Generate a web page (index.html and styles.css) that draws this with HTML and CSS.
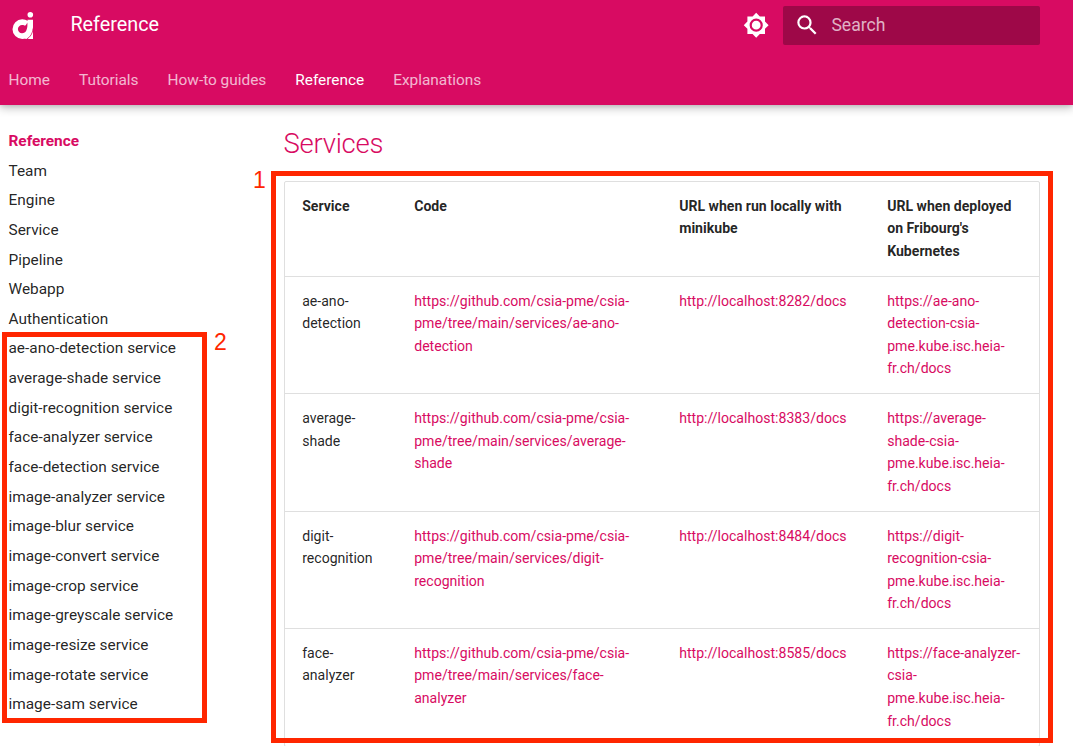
FILE: index.html
```html
<!DOCTYPE html>
<html lang="en">
<head>
<meta charset="utf-8">
<title>Reference</title>
<link rel="stylesheet" href="styles.css">
</head>
<body>
<header class="header">
  <div class="topbar">
    <svg class="logo" viewBox="0 0 22 28" width="22" height="28">
      <circle cx="18.3" cy="2.800" r="2.800" fill="#fff"/>
      <path fill="#fff" d="M21 17V27H13Z"/>
      <path fill="#fff" d="M10.200 7.300C12.500 7.300 14.300 8 15.500 9V7.800H21V15C21 22.500 16.500 27 10.200 27A9.700 9.850 0 0 1 10.200 7.300Z"/>
      <path fill="#d80b62" d="M10.200 13C12 13 12.800 14 13.300 13.500C14.300 12.800 15 11.500 15.300 10.500C15.700 13.500 15.300 16.500 14.300 18.500C13.500 20.300 12 21.300 10 21.300A4.200 4.150 0 0 1 10.200 13Z"/>
      <path fill="none" stroke="#d80b62" stroke-width=".8" d="M21.200 16.500C20.500 21.500 18.500 25 14.500 27.200"/>
    </svg>
    <div class="title">Reference</div>
    <svg class="theme" viewBox="0 0 24 24"><path fill="#fff" d="M12 8a4 4 0 0 0-4 4 4 4 0 0 0 4 4 4 4 0 0 0 4-4 4 4 0 0 0-4-4m0 10a6 6 0 0 1-6-6 6 6 0 0 1 6-6 6 6 0 0 1 6 6 6 6 0 0 1-6 6m8-9.310V4h-4.690L12 .69 8.690 4H4v4.690L.69 12 4 15.310V20h4.690L12 23.310 15.310 20H20v-4.690L23.310 12 20 8.690Z"/></svg>
    <div class="search">
      <svg class="glass" viewBox="0 0 24 24"><path fill="#fff" d="M9.500 3A6.500 6.500 0 0 1 16 9.500c0 1.610-.59 3.090-1.560 4.230l.27.27h.79l5 5-1.500 1.500-5-5v-.79l-.27-.27A6.516 6.516 0 0 1 9.500 16 6.500 6.500 0 0 1 3 9.500 6.500 6.500 0 0 1 9.500 3m0 2C7 5 5 7 5 9.500S7 14 9.500 14 14 12 14 9.500 12 5 9.500 5Z"/></svg>
      <span class="hint">Search</span>
    </div>
  </div>
  <nav class="tabs">
    <a>Home</a><a>Tutorials</a><a>How-to guides</a><a class="active">Reference</a><a>Explanations</a>
  </nav>
</header>
<div class="main">
  <nav class="sidebar">
    <a class="section">Reference</a>
    <a>Team</a>
    <a>Engine</a>
    <a>Service</a>
    <a>Pipeline</a>
    <a>Webapp</a>
    <a>Authentication</a>
    <a>ae-ano-detection service</a>
    <a>average-shade service</a>
    <a>digit-recognition service</a>
    <a>face-analyzer service</a>
    <a>face-detection service</a>
    <a>image-analyzer service</a>
    <a>image-blur service</a>
    <a>image-convert service</a>
    <a>image-crop service</a>
    <a>image-greyscale service</a>
    <a>image-resize service</a>
    <a>image-rotate service</a>
    <a>image-sam service</a>
  </nav>
  <article class="content">
    <h2>Services</h2>
    <table>
      <colgroup><col class="c1"><col class="c2"><col class="c3"><col></colgroup>
      <thead>
        <tr><th>Service</th><th>Code</th><th>URL when run locally with<br>minikube</th><th>URL when deployed<br>on Fribourg's<br>Kubernetes</th></tr>
      </thead>
      <tbody>
        <tr><td>ae-ano-<br>detection</td><td><a>https://github.com/csia-pme/csia-<br>pme/tree/main/services/ae-ano-<br>detection</a></td><td><a>http://localhost:8282/docs</a></td><td><a>https://ae-ano-<br>detection-csia-<br>pme.kube.isc.heia-<br>fr.ch/docs</a></td></tr>
        <tr><td>average-<br>shade</td><td><a>https://github.com/csia-pme/csia-<br>pme/tree/main/services/average-<br>shade</a></td><td><a>http://localhost:8383/docs</a></td><td><a>https://average-<br>shade-csia-<br>pme.kube.isc.heia-<br>fr.ch/docs</a></td></tr>
        <tr><td>digit-<br>recognition</td><td><a>https://github.com/csia-pme/csia-<br>pme/tree/main/services/digit-<br>recognition</a></td><td><a>http://localhost:8484/docs</a></td><td><a>https://digit-<br>recognition-csia-<br>pme.kube.isc.heia-<br>fr.ch/docs</a></td></tr>
        <tr><td>face-<br>analyzer</td><td><a>https://github.com/csia-pme/csia-<br>pme/tree/main/services/face-<br>analyzer</a></td><td><a>http://localhost:8585/docs</a></td><td><a>https://face-analyzer-<br>csia-<br>pme.kube.isc.heia-<br>fr.ch/docs</a></td></tr>
      </tbody>
    </table>
  </article>
</div>
<div class="frame frame-table"></div>
<div class="frame frame-nav"></div>
<span class="mark mark-1">1</span>
<span class="mark mark-2">2</span>
</body>
</html>
```
FILE: styles.css
```css
* { box-sizing: border-box; }
body {
  margin: 0;
  height: 746px;
  overflow: hidden;
  position: relative;
  background: #fff;
  color: rgba(0, 0, 0, .87);
  font-family: Roboto, "Liberation Sans", sans-serif;
}
.header {
  height: 105px;
  background: #d80b62;
  color: #fff;
  box-shadow: 0 0 4.400px rgba(0, 0, 0, .15), 0 4.400px 8.800px rgba(0, 0, 0, .24);
}
.topbar {
  height: 52px;
  display: flex;
  align-items: center;
  padding: 0 33px 3px 12px;
}
.logo { margin-top: 3px; }
.title { margin-left: 36.400px; font-size: 19.800px; flex: 1; }
.theme { width: 26.400px; height: 26.400px; margin: 2px 13.500px 0 0; }
.search {
  width: 257px;
  height: 39px;
  margin-top: 2px;
  border-radius: 2px;
  background: #9e0848;
  display: flex;
  align-items: center;
  padding-left: 10.500px;
  font-size: 17.600px;
  color: rgba(255, 255, 255, .7);
}
.glass { width: 26.400px; height: 26.400px; margin-right: 11.500px; }
.hint { padding-bottom: 2px; }
.tabs {
  display: flex;
  gap: 29px;
  padding: 18px 0 0 8.500px;
  font-size: 15.400px;
  line-height: 20px;
}
.tabs a { opacity: .7; }
.tabs .active { opacity: 1; }
.main { display: flex; }
.sidebar {
  width: 284px;
  padding: 26px 0 0 8.500px;
  display: flex;
  flex-direction: column;
  gap: 9.640px;
  font-size: 15.400px;
  line-height: 20.020px;
}
.section { color: #d80b62; font-weight: 700; }
.content { width: 756px; padding-top: 19px; }
h2 {
  margin: 0 0 18px -.500px;
  font-size: 27.500px;
  line-height: 39px;
  font-weight: 300;
  letter-spacing: -.01em;
  color: #d80b62;
}
table {
  width: 756px;
  table-layout: fixed;
  border: 1px solid #dfdfdf;
  border-radius: 2px;
  border-spacing: 0;
  font-size: 14.080px;
  line-height: 22.530px;
}
.c1 { width: 112px; }
.c2 { width: 265px; }
.c3 { width: 208px; }
th, td {
  padding: 12.800px 0 13.500px 17.200px;
  text-align: left;
  vertical-align: top;
  white-space: nowrap;
}
th { font-weight: 700; }
td { border-top: 1px solid #dfdfdf; }
td a { color: #d80b62; }
.frame { position: absolute; border: 5px solid #ff2600; }
.frame-table { left: 271px; top: 171px; width: 782px; height: 572px; }
.frame-nav { left: 2px; top: 332px; width: 205px; height: 391px; }
.mark {
  position: absolute;
  color: #ff2600;
  font: 23px/26px "Liberation Sans", sans-serif;
}
.mark-1 { left: 253px; top: 167px; }
.mark-2 { left: 214px; top: 329px; }
```
